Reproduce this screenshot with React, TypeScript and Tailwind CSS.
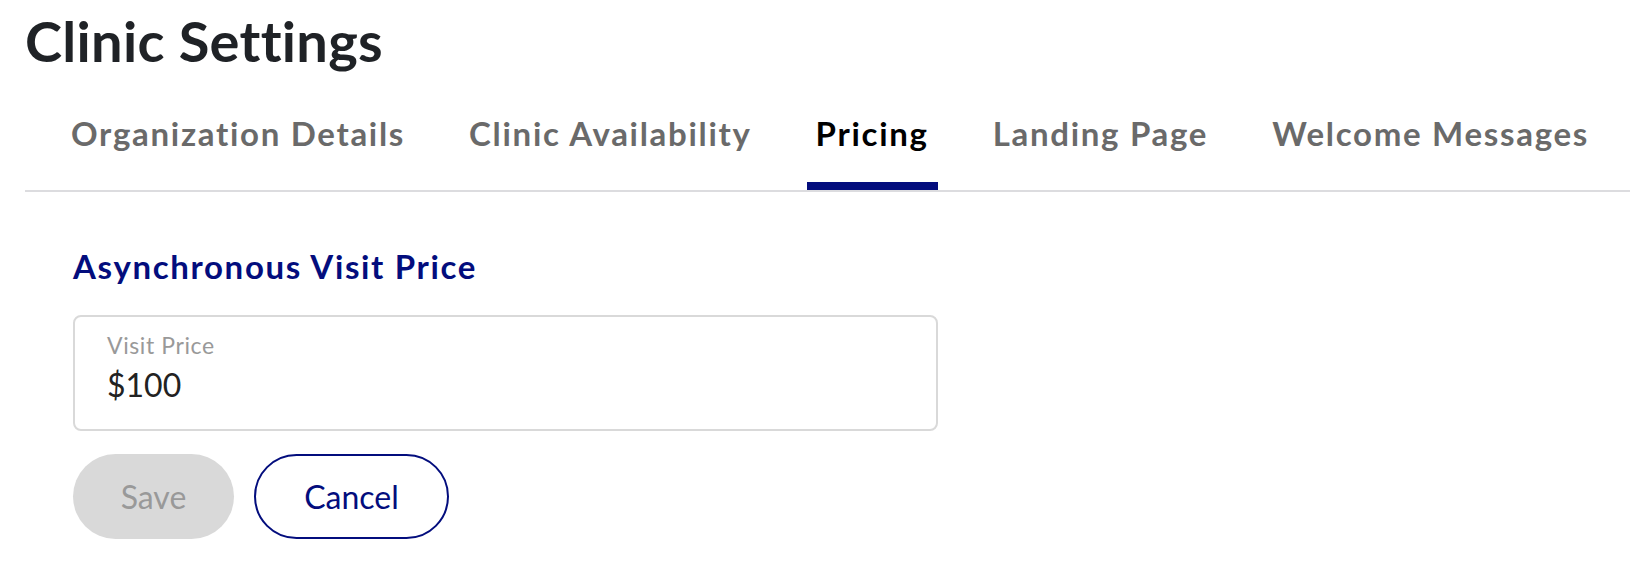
import { useState } from "react";

const tabs = [
  "Organization Details",
  "Clinic Availability",
  "Pricing",
  "Landing Page",
  "Welcome Messages",
];

export default function App() {
  const [active, setActive] = useState("Pricing");
  const [price, setPrice] = useState("$100");

  return (
    <div className="min-h-screen bg-white pl-[25px] font-['Lato','Noto_Sans',sans-serif] [font-variant-ligatures:none]">
      <h1 className="pt-[7px] text-[56px] font-bold leading-[1.2] tracking-[0.3px] text-[#1f2226]">
        Clinic Settings
      </h1>

      <div className="mt-[40px] flex gap-[46px] border-b-2 border-[#dcdcdf] pl-[37px]">
        {tabs.map((tab) => (
          <button
            key={tab}
            onClick={() => setActive(tab)}
            className={`border-b-[8px] px-[9px] pb-[28px] text-[33px] font-bold leading-[1.2] tracking-[1.7px] ${
              active === tab
                ? "border-[#030d7d] text-black"
                : "border-transparent text-[#6a6a6a]"
            }`}
          >
            {tab}
          </button>
        ))}
      </div>

      <div className="pl-12">
        <h2 className="mt-[55px] text-[33px] font-bold leading-[1.2] tracking-[1.65px] text-[#030d7d]">
          Asynchronous Visit Price
        </h2>

        <label className="mt-[29px] flex w-[865px] flex-col rounded-lg border-2 border-[#d9d9d9] px-[32px] pt-[15px] pb-[25px]">
          <span className="text-[23px] leading-[1.2] tracking-[0.6px] text-[#999999]">Visit Price</span>
          <input
            value={price}
            onChange={(e) => setPrice(e.target.value)}
            className="mt-[6px] text-[32px] leading-[1.2] text-[#222222] outline-none"
          />
        </label>

        <div className="mt-[23px] flex gap-5">
          <button
            disabled
            className="flex h-[85px] w-[161px] items-center justify-center rounded-full bg-[#d9d9d9] text-[32px] text-[#999999]"
          >
            Save
          </button>
          <button className="flex h-[85px] w-[195px] items-center justify-center rounded-full border-2 border-[#030d7d] bg-white text-[32px] text-[#030d7d]">
            Cancel
          </button>
        </div>
      </div>
    </div>
  );
}
